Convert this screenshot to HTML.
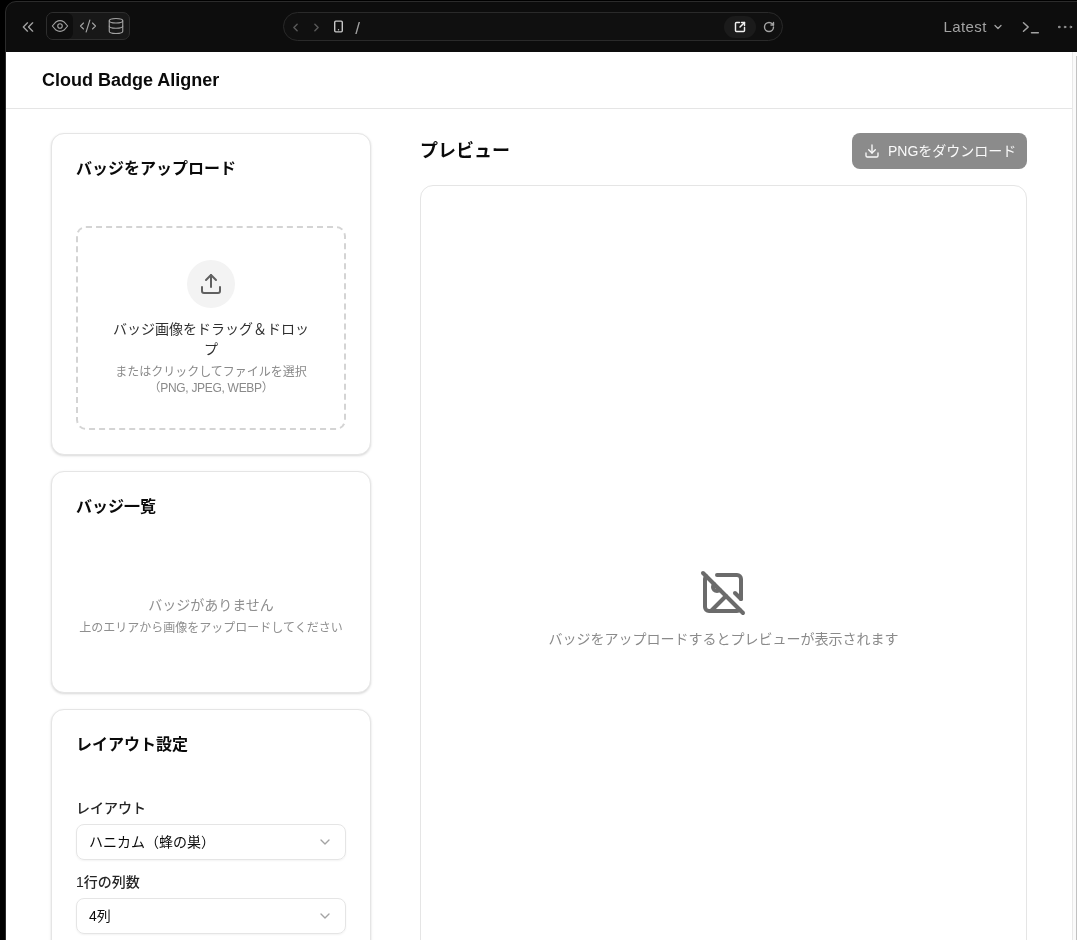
<!DOCTYPE html>
<html lang="ja">
<head>
<meta charset="utf-8">
<title>Cloud Badge Aligner</title>
<style>
*{box-sizing:border-box;margin:0;padding:0}
html,body{width:1077px;height:940px;overflow:hidden;background:#000}
body{position:relative;will-change:transform;font-family:"Liberation Sans","Noto Sans CJK JP",sans-serif;color:#0a0a0a;-webkit-font-smoothing:antialiased}
.abs{position:absolute}
svg{display:block;fill:none;stroke:currentColor;stroke-width:2;stroke-linecap:round;stroke-linejoin:round}
#shell{left:5px;top:1px;width:1080px;height:945px;background:#0d0d0d;border:1px solid #2b2b2b;border-radius:11px 0 0 0}
#page{left:6px;top:52px;width:1066px;height:888px;background:#fff;overflow:hidden}
#sb{left:1072px;top:52px;width:5px;height:888px;background:#fafafa;border-left:1px solid #e8e8e8}
#sbt{left:1076px;top:56px;width:1px;height:884px;background:#c1c1c1}
.tb{color:#a3a3a3}
#grp{left:46px;top:12px;width:84px;height:28px;border:1px solid #2e2e2e;border-radius:7px;background:#181818}
.i15{stroke-width:1.5}
#eyeb{left:47px;top:13px;width:26px;height:26px;background:#0e0e0e;border-radius:6px}
#url{left:283px;top:12px;width:500px;height:29px;border:1px solid #2a2a2a;border-radius:15px;background:#101010}
#ext{left:724px;top:16px;width:32px;height:22px;border-radius:11px;background:#1b1b1b}
#latest{left:943.5px;top:18px;font-size:15px;line-height:18px;color:#a3a3a3;letter-spacing:.4px}
#hdr{left:0;top:0;width:1066px;height:57px;border-bottom:1px solid #e5e5e5;background:#fff}
#title{left:36px;top:15px;font-size:18px;line-height:26px;font-weight:700;color:#0a0a0a;white-space:nowrap}
.card{background:#fff;border:1px solid #e5e5e5;border-radius:13px;box-shadow:0 1px 3px rgba(0,0,0,.10),0 1px 2px rgba(0,0,0,.06)}
.h3{font-size:16px;line-height:24px;font-weight:700;color:#0a0a0a;white-space:nowrap}
#c1{left:45px;top:81px;width:320px;height:322px}
#c2{left:45px;top:419px;width:320px;height:222px}
#c3{left:45px;top:657px;width:320px;height:400px}
#drop{left:24px;top:92px;width:270px;height:204px;border:2px dashed #d4d4d4;border-radius:10px;text-align:center}
#circ{left:109px;top:32px;width:48px;height:48px;border-radius:50%;background:#f3f3f3;color:#606060}
.t14{font-size:14px;line-height:20px}
.t12{font-size:12px;line-height:16px}
.sel{left:24px;width:270px;height:36px;border:1px solid #e5e5e5;border-radius:8px;box-shadow:0 1px 2px rgba(0,0,0,.05);font-size:14px;line-height:34px;padding-left:12px;color:#0a0a0a}
.sel svg{position:absolute;right:12px;top:9px;color:#a3a3a3}
#ph{left:414px;top:85px;font-size:18px;line-height:28px;font-weight:700;white-space:nowrap}
#btn{left:846px;top:81px;width:175px;height:36px;border-radius:8px;background:#8b8b8b;color:#fafafa;font-size:14px;line-height:36px;white-space:nowrap}
#prev{left:414px;top:133px;width:607px;height:800px;border:1px solid #e5e5e5;border-radius:13px;background:#fff}
</style>
</head>
<body>
<div id="shell" class="abs"></div>

<!-- top bar -->
<svg class="abs tb" style="left:18px;top:17px;stroke-width:1.6" width="20" height="20" viewBox="0 0 24 24"><path d="m11.4 17-5-5 5-5"/><path d="m17.6 17-5-5 5-5"/></svg>
<div id="grp" class="abs"></div>
<div id="eyeb" class="abs"></div>
<svg class="abs tb i15" style="left:51px;top:17px" width="18" height="18" viewBox="0 0 24 24"><path d="M1.8 12 L6.6 6.6 Q12 3.2 17.4 6.6 L22.2 12 L17.4 17.4 Q12 20.8 6.6 17.4 Z"/><circle cx="12" cy="12" r="3"/></svg>
<svg class="abs tb i15" style="left:79px;top:17px" width="18" height="18" viewBox="0 0 24 24"><path d="m18 16 4-4-4-4"/><path d="m6 8-4 4 4 4"/><path d="m14.5 4-5 16"/></svg>
<svg class="abs tb i15" style="left:107px;top:17px" width="18" height="18" viewBox="0 0 24 24"><ellipse cx="12" cy="5" rx="9" ry="3"/><path d="M3 5V19A9 3 0 0 0 21 19V5"/><path d="M3 12A9 3 0 0 0 21 12"/></svg>

<div id="url" class="abs"></div>
<svg class="abs" style="left:289.4px;top:20.6px;color:#585858;stroke-width:2.7" width="13" height="13" viewBox="0 0 24 24"><path d="m15 18-6-6 6-6"/></svg>
<svg class="abs" style="left:309.6px;top:20.6px;color:#585858;stroke-width:2.7" width="13" height="13" viewBox="0 0 24 24"><path d="m9 18 6-6-6-6"/></svg>
<svg class="abs" style="left:331.8px;top:20.4px;color:#c8c8c8;stroke-width:2.6" width="13" height="13" viewBox="0 0 24 24"><rect width="14" height="20" x="5" y="2" rx="2" ry="2"/><path d="M12 18h.01"/></svg>
<div class="abs" style="left:355.3px;top:19.5px;font-size:17px;line-height:18px;color:#a3a3a3">/</div>
<div id="ext" class="abs"></div>
<svg class="abs" style="left:734px;top:21px;color:#f0f0f0;stroke-width:2.9" width="12" height="12" viewBox="0 0 24 24"><path d="M21 13v6a2 2 0 0 1-2 2H5a2 2 0 0 1-2-2V5a2 2 0 0 1 2-2h6"/><path d="m21 3-9 9"/><path d="M15 3h6v6"/></svg>
<svg class="abs tb" style="left:762.5px;top:21px;stroke-width:2.8" width="12" height="12" viewBox="0 0 24 24"><path d="M21 12a9 9 0 1 1-9-9c2.52 0 4.93 1 6.74 2.74L21 8"/><path d="M21 3v5h-5"/></svg>

<div id="latest" class="abs">Latest</div>
<svg class="abs tb" style="left:992.2px;top:21.4px;stroke-width:2.6" width="12" height="12" viewBox="0 0 24 24"><path d="m6 9 6 6 6-6"/></svg>
<svg class="abs tb" style="left:1018px;top:17px;stroke-width:1.5" width="24" height="24" viewBox="0 0 24 24"><path d="M5.5 5.7l4.7 4.3-4.7 4.3"/><path d="M13.5 15.7h6.8"/></svg>
<svg class="abs tb" style="left:1054.8px;top:16.8px;stroke-width:1.2" width="20" height="20" viewBox="0 0 24 24"><circle cx="12" cy="12" r="1"/><circle cx="19" cy="12" r="1"/><circle cx="5" cy="12" r="1"/></svg>

<!-- page -->
<div id="page" class="abs">
  <div id="hdr" class="abs"><div id="title" class="abs">Cloud Badge Aligner</div></div>

  <div id="c1" class="abs card">
    <div class="abs h3" style="left:24px;top:23px">バッジをアップロード</div>
    <div id="drop" class="abs">
      <div id="circ" class="abs"><svg style="margin:12px" width="24" height="24" viewBox="0 0 24 24"><path d="M21 15v4a2 2 0 0 1-2 2H5a2 2 0 0 1-2-2v-4"/><polyline points="17 8 12 3 7 8"/><line x1="12" x2="12" y1="3" y2="15"/></svg></div>
      <div class="abs t14" style="left:30px;width:206px;top:91px;color:#303030">バッジ画像をドラッグ＆ドロップ</div>
      <div class="abs t12" style="left:30px;width:206px;top:136px;color:#8a8a8a">またはクリックしてファイルを選択<br><span style="letter-spacing:-.3px">（PNG, JPEG, WEBP）</span></div>
    </div>
  </div>

  <div id="c2" class="abs card">
    <div class="abs h3" style="left:24px;top:23px">バッジ一覧</div>
    <div class="abs t14" style="left:0;width:318px;top:123px;text-align:center;color:#8f8f8f">バッジがありません</div>
    <div class="abs t12" style="left:0;width:318px;top:148px;text-align:center;color:#8f8f8f">上のエリアから画像をアップロードしてください</div>
  </div>

  <div id="c3" class="abs card">
    <div class="abs h3" style="left:24px;top:23px">レイアウト設定</div>
    <div class="abs t14" style="left:24px;top:88px;color:#262626;font-weight:500">レイアウト</div>
    <div class="abs sel" style="top:114px">ハニカム（蜂の巣）<svg width="16" height="16" viewBox="0 0 24 24"><path d="m6 9 6 6 6-6"/></svg></div>
    <div class="abs t14" style="left:24px;top:162px;color:#262626;font-weight:500">1行の列数</div>
    <div class="abs sel" style="top:188px">4列<svg width="16" height="16" viewBox="0 0 24 24"><path d="m6 9 6 6 6-6"/></svg></div>
  </div>

  <div id="ph" class="abs">プレビュー</div>
  <div id="btn" class="abs"><svg class="abs" style="left:12px;top:10px" width="16" height="16" viewBox="0 0 24 24"><path d="M21 15v4a2 2 0 0 1-2 2H5a2 2 0 0 1-2-2v-4"/><polyline points="7 10 12 15 17 10"/><line x1="12" x2="12" y1="15" y2="3"/></svg><span class="abs" style="left:36px;top:0">PNGをダウンロード</span></div>
  <div id="prev" class="abs">
    <svg class="abs" style="left:278px;top:383px;color:#6b6b6b" width="48" height="48" viewBox="0 0 24 24"><line x1="2" x2="22" y1="2" y2="22"/><path d="M10.41 10.41a2 2 0 1 1-2.83-2.83"/><line x1="13.5" x2="6" y1="13.5" y2="21"/><line x1="18" x2="21" y1="12" y2="15"/><path d="M3.59 3.59A1.99 1.99 0 0 0 3 5v14a2 2 0 0 0 2 2h14c.55 0 1.052-.22 1.41-.59"/><path d="M21 15V5a2 2 0 0 0-2-2H9"/></svg>
    <div class="abs t14" style="left:0;width:605px;top:443px;text-align:center;color:#8a8a8a">バッジをアップロードするとプレビューが表示されます</div>
  </div>
</div>

<div id="sb" class="abs"></div>
<div id="sbt" class="abs"></div>
</body>
</html>
